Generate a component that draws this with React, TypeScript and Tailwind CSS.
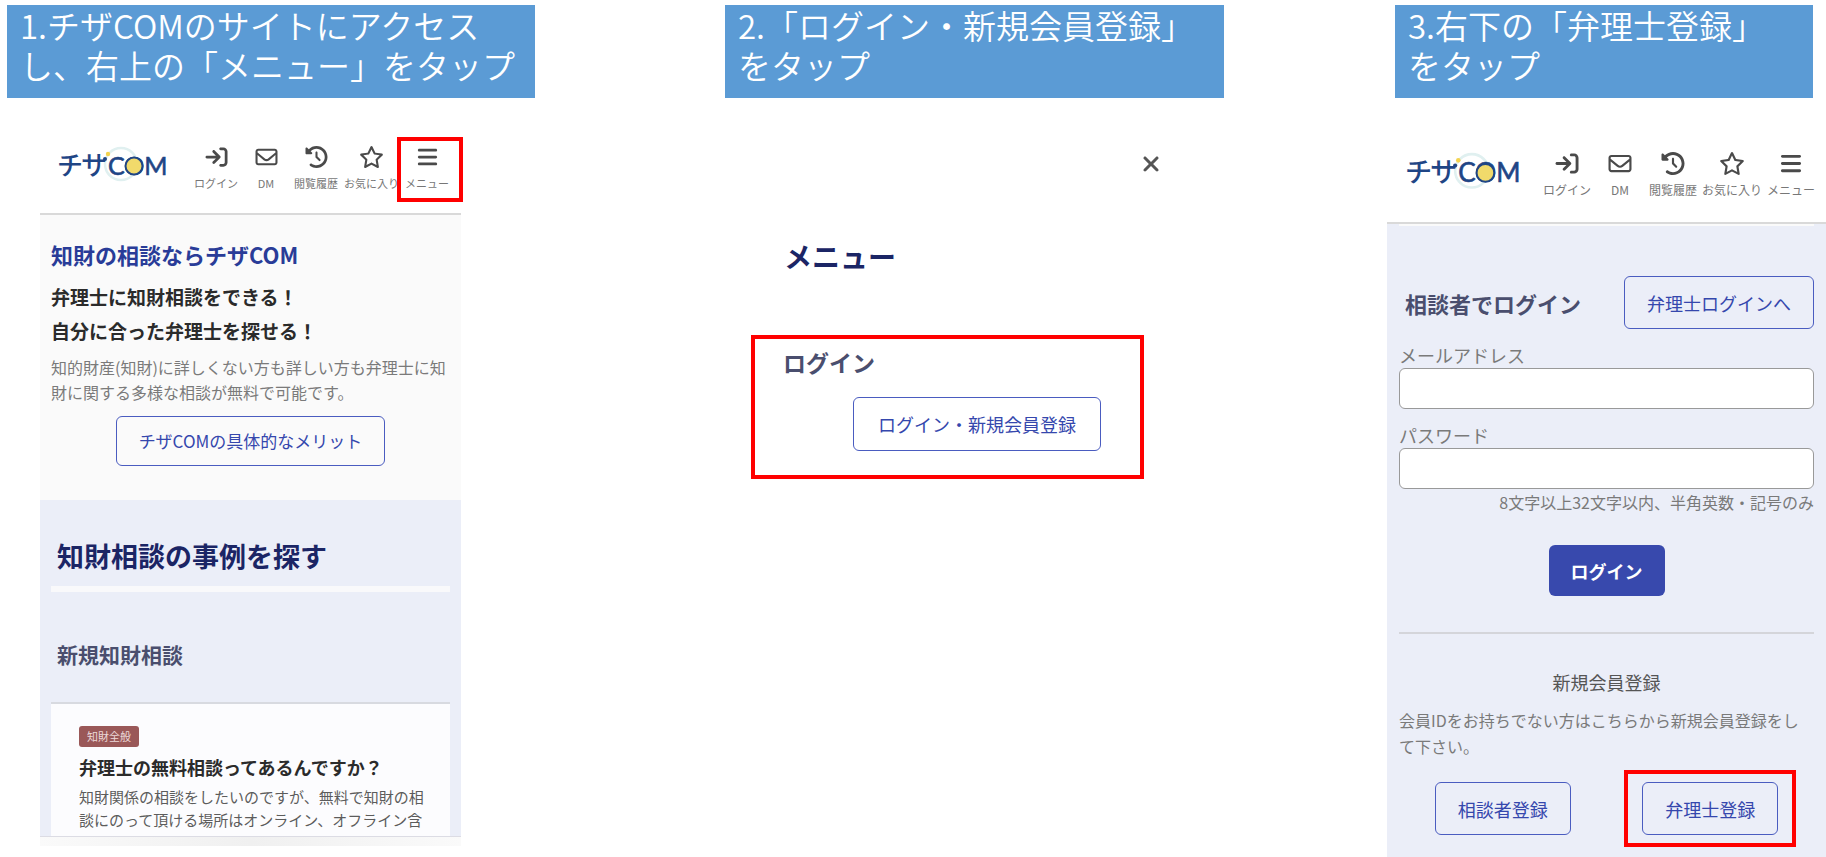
import React from 'react'
import {
  FaArrowRightToBracket,
  FaBars,
  FaClockRotateLeft,
  FaRegEnvelope,
  FaRegStar,
  FaXmark,
} from 'react-icons/fa6'

const outline =
  'rounded-md border border-[#4a5cc0] text-[#3547ad] whitespace-nowrap'

const Banner = ({ children, className = '' }: { children: React.ReactNode; className?: string }) => (
  <h2
    className={`mt-[5px] h-[93px] bg-[#5b9bd5] text-[33px] leading-10 font-[350] whitespace-nowrap text-white ${className}`}
  >
    {children}
  </h2>
)

const Logo = ({ className }: { className: string }) => (
  <svg viewBox="0 0 112 37" role="img" aria-label="チザCOM" className={className}>
    <circle cx="64" cy="18" r="16" fill="none" stroke="#e0f0f0" strokeWidth="2.5" />
    <g fill="#1f4585">
      <text x="0" y="29" fontSize="26" fontWeight="500">チ</text>
      <text x="24" y="29" fontSize="26" fontWeight="500">サ</text>
      <text x="51" y="29" fontSize="25" fontFamily="Lato" stroke="#1f4585" strokeWidth="0.6">COM</text>
    </g>
    <circle cx="77" cy="20" r="8.5" fill="#f1da6b" stroke="#1f4585" strokeWidth="2" />
    <circle cx="48" cy="13" r="2" fill="#1f4585" />
    <circle cx="51" cy="8" r="2.2" fill="#f3d34f" />
  </svg>
)

const links = [
  { label: 'ログイン', Icon: FaArrowRightToBracket },
  { label: 'DM', Icon: FaRegEnvelope },
  { label: '閲覧履歴', Icon: FaClockRotateLeft },
  { label: 'お気に入り', Icon: FaRegStar },
  { label: 'メニュー', Icon: FaBars },
]

const Nav = ({ large = false }: { large?: boolean }) => (
  <nav className={large ? 'flex gap-[5px] text-[12px]' : 'flex gap-1.5 text-[11px]'}>
    {links.map(({ label, Icon }) => (
      <button
        key={label}
        type="button"
        className={`relative flex flex-col items-center gap-[7px] leading-4 whitespace-nowrap text-[#777] ${large ? 'min-w-12' : 'min-w-11'}`}
      >
        <Icon className={`text-[#4a4a4a] ${large ? 'h-[23px] w-[26px]' : 'h-[22px] w-[25px]'}`} />
        <span>{label}</span>
        {!large && label === 'メニュー' && (
          <span className="absolute -top-[9px] -right-3.5 -bottom-[11px] -left-2 border-4 border-[#ff0000]" />
        )}
      </button>
    ))}
  </nav>
)

const StepAccess = () => (
  <section className="min-w-0 pr-[190px] pl-[7px]">
    <Banner className="pl-[13px]">
      1.チザCOMのサイトにアクセス
      <br />
      し、右上の「メニュー」をタップ
    </Banner>
    <div className="mr-[74px] ml-[33px]">
      <header className="flex items-start justify-between border-b-2 border-[#d9d9d9] pt-12 pr-3 pb-[22px] pl-[17px]">
        <Logo className="w-28" />
        <Nav />
      </header>
      <div className="bg-[#fafafa] px-[11px] pt-[23px] pb-[34px]">
        <h3 className="text-[22px] leading-8 font-bold text-[#293c98]">知財の相談ならチザCOM</h3>
        <p className="mt-2.5 text-[19px] leading-[34px] font-bold text-[#2b2b2b]">
          弁理士に知財相談をできる！
          <br />
          自分に合った弁理士を探せる！
        </p>
        <p className="mt-[7px] text-base leading-[25px] text-[#7a7a7a]">
          知的財産(知財)に詳しくない方も詳しい方も弁理士に知財に関する多様な相談が無料で可能です。
        </p>
        <div className="mt-[11px] flex justify-center">
          <button type="button" className={`h-[50px] px-[22px] text-[17px] ${outline}`}>
            チザCOMの具体的なメリット
          </button>
        </div>
      </div>
      <div className="bg-[#ebeef8] px-[11px] pt-9">
        <h3 className="border-b-6 border-[#f9f9fb] pb-2.5 pl-1.5 text-[27px] leading-10 font-bold text-[#1b2565]">
          知財相談の事例を探す
        </h3>
        <h4 className="mt-[46px] pl-1.5 text-[21px] leading-8 font-bold text-[#4a4e6e]">新規知財相談</h4>
        <article className="mt-8 border-t-2 border-[#d8dae0] bg-[#fcfcfe] pt-[22px] pr-6 pb-[5px] pl-7">
          <span className="block w-fit rounded-[3px] bg-[#9a5858] px-2 text-[11px] leading-[21px] text-[#ecd8d8]">
            知財全般
          </span>
          <h5 className="mt-1.5 text-lg leading-7 font-bold text-[#2b2b2b]">
            弁理士の無料相談ってあるんですか？
          </h5>
          <p className="mt-1 text-[15px] leading-[23px] text-[#5c5c5c]">
            知財関係の相談をしたいのですが、無料で知財の相談にのって頂ける場所はオンライン、オフライン含
          </p>
        </article>
      </div>
      <div className="h-2.5 border-t border-[#dcdce4] bg-linear-to-r from-[#fafafa] via-[#f0f0f0] to-[#fafafa]" />
    </div>
  </section>
)

const StepMenu = () => (
  <section className="min-w-0 pr-[163px]">
    <Banner className="pl-[13px]">
      2.「ログイン・新規会員登録」
      <br />
      をタップ
    </Banner>
    <div className="flex justify-end pt-[54px] pr-[61px]">
      <button type="button" aria-label="閉じる">
        <FaXmark className="size-6 text-[#555]" />
      </button>
    </div>
    <h3 className="mt-[60px] pl-[59px] text-[28px] leading-10 font-bold text-[#1b2565]">メニュー</h3>
    <div className="mt-[59px] mr-20 ml-[26px] border-4 border-[#ff0000] pt-[7px] pr-[39px] pb-6 pl-7">
      <h4 className="text-[23px] leading-8 font-bold text-[#4a4e6e]">ログイン</h4>
      <div className="mt-[19px] flex justify-end">
        <button type="button" className={`h-[54px] px-6 text-lg ${outline}`}>
          ログイン・新規会員登録
        </button>
      </div>
    </div>
  </section>
)

const StepRegister = () => (
  <section className="flex min-w-0 flex-col">
    <Banner className="mr-[13px] ml-2 pl-[13px]">
      3.右下の「弁理士登録」
      <br />
      をタップ
    </Banner>
    <header className="flex items-start justify-between border-b-2 border-[#d9d9d9] pt-[54px] pr-[11px] pb-6 pl-[18px]">
      <Logo className="w-[117px]" />
      <Nav large />
    </header>
    <div className="flex-1 bg-[#ebeef8] px-3 pb-[22px]">
      <div className="h-0.5 bg-[#fafafa]" />
      <form>
        <div className="mt-[50px] flex items-center justify-between">
          <h3 className="pl-1.5 text-[22px] leading-8 font-bold text-[#4a4e6e]">相談者でログイン</h3>
          <button type="button" className={`h-[53px] px-[22px] text-lg ${outline}`}>
            弁理士ログインへ
          </button>
        </div>
        <label htmlFor="email" className="mt-3.5 block pb-px text-lg leading-6 text-[#7a7a7a]">
          メールアドレス
        </label>
        <input
          id="email"
          type="email"
          className="block h-[41px] w-full rounded-md border border-[#999] bg-white px-3"
        />
        <label htmlFor="password" className="mt-3.5 block pb-px text-lg leading-6 text-[#7a7a7a]">
          パスワード
        </label>
        <input
          id="password"
          type="password"
          className="block h-[41px] w-full rounded-md border border-[#999] bg-white px-3"
        />
        <p className="mt-px text-right text-base leading-6 text-[#7a7a7a]">
          8文字以上32文字以内、半角英数・記号のみ
        </p>
        <button
          type="submit"
          className="mx-auto mt-[31px] block h-[51px] rounded-md bg-[#3849ad] px-[22px] text-lg font-bold text-white"
        >
          ログイン
        </button>
      </form>
      <hr className="mt-9 border-t-2 border-[#d4d5da]" />
      <h4 className="mt-[34px] text-center text-lg leading-7 text-[#555]">新規会員登録</h4>
      <p className="mt-[11px] text-base leading-[26px] text-[#7a7a7a]">
        会員IDをお持ちでない方はこちらから新規会員登録をし
        <br />
        て下さい。
      </p>
      <div className="mt-[23px] grid grid-cols-2 justify-items-center">
        <button type="button" className={`h-[53px] px-[22px] text-lg ${outline}`}>
          相談者登録
        </button>
        <div className="relative">
          <button type="button" className={`h-[53px] px-[22px] text-lg ${outline}`}>
            弁理士登録
          </button>
          <span className="pointer-events-none absolute -inset-x-[18px] -inset-y-3 border-4 border-[#ff0000]" />
        </div>
      </div>
    </div>
  </section>
)

const App = () => {
  return (
    <main
      lang="ja"
      className="grid min-h-screen grid-cols-[725fr_662fr_439fr] overflow-hidden bg-white font-['Noto_Sans_CJK_JP',sans-serif]"
    >
      <StepAccess />
      <StepMenu />
      <StepRegister />
    </main>
  )
}

export default App
